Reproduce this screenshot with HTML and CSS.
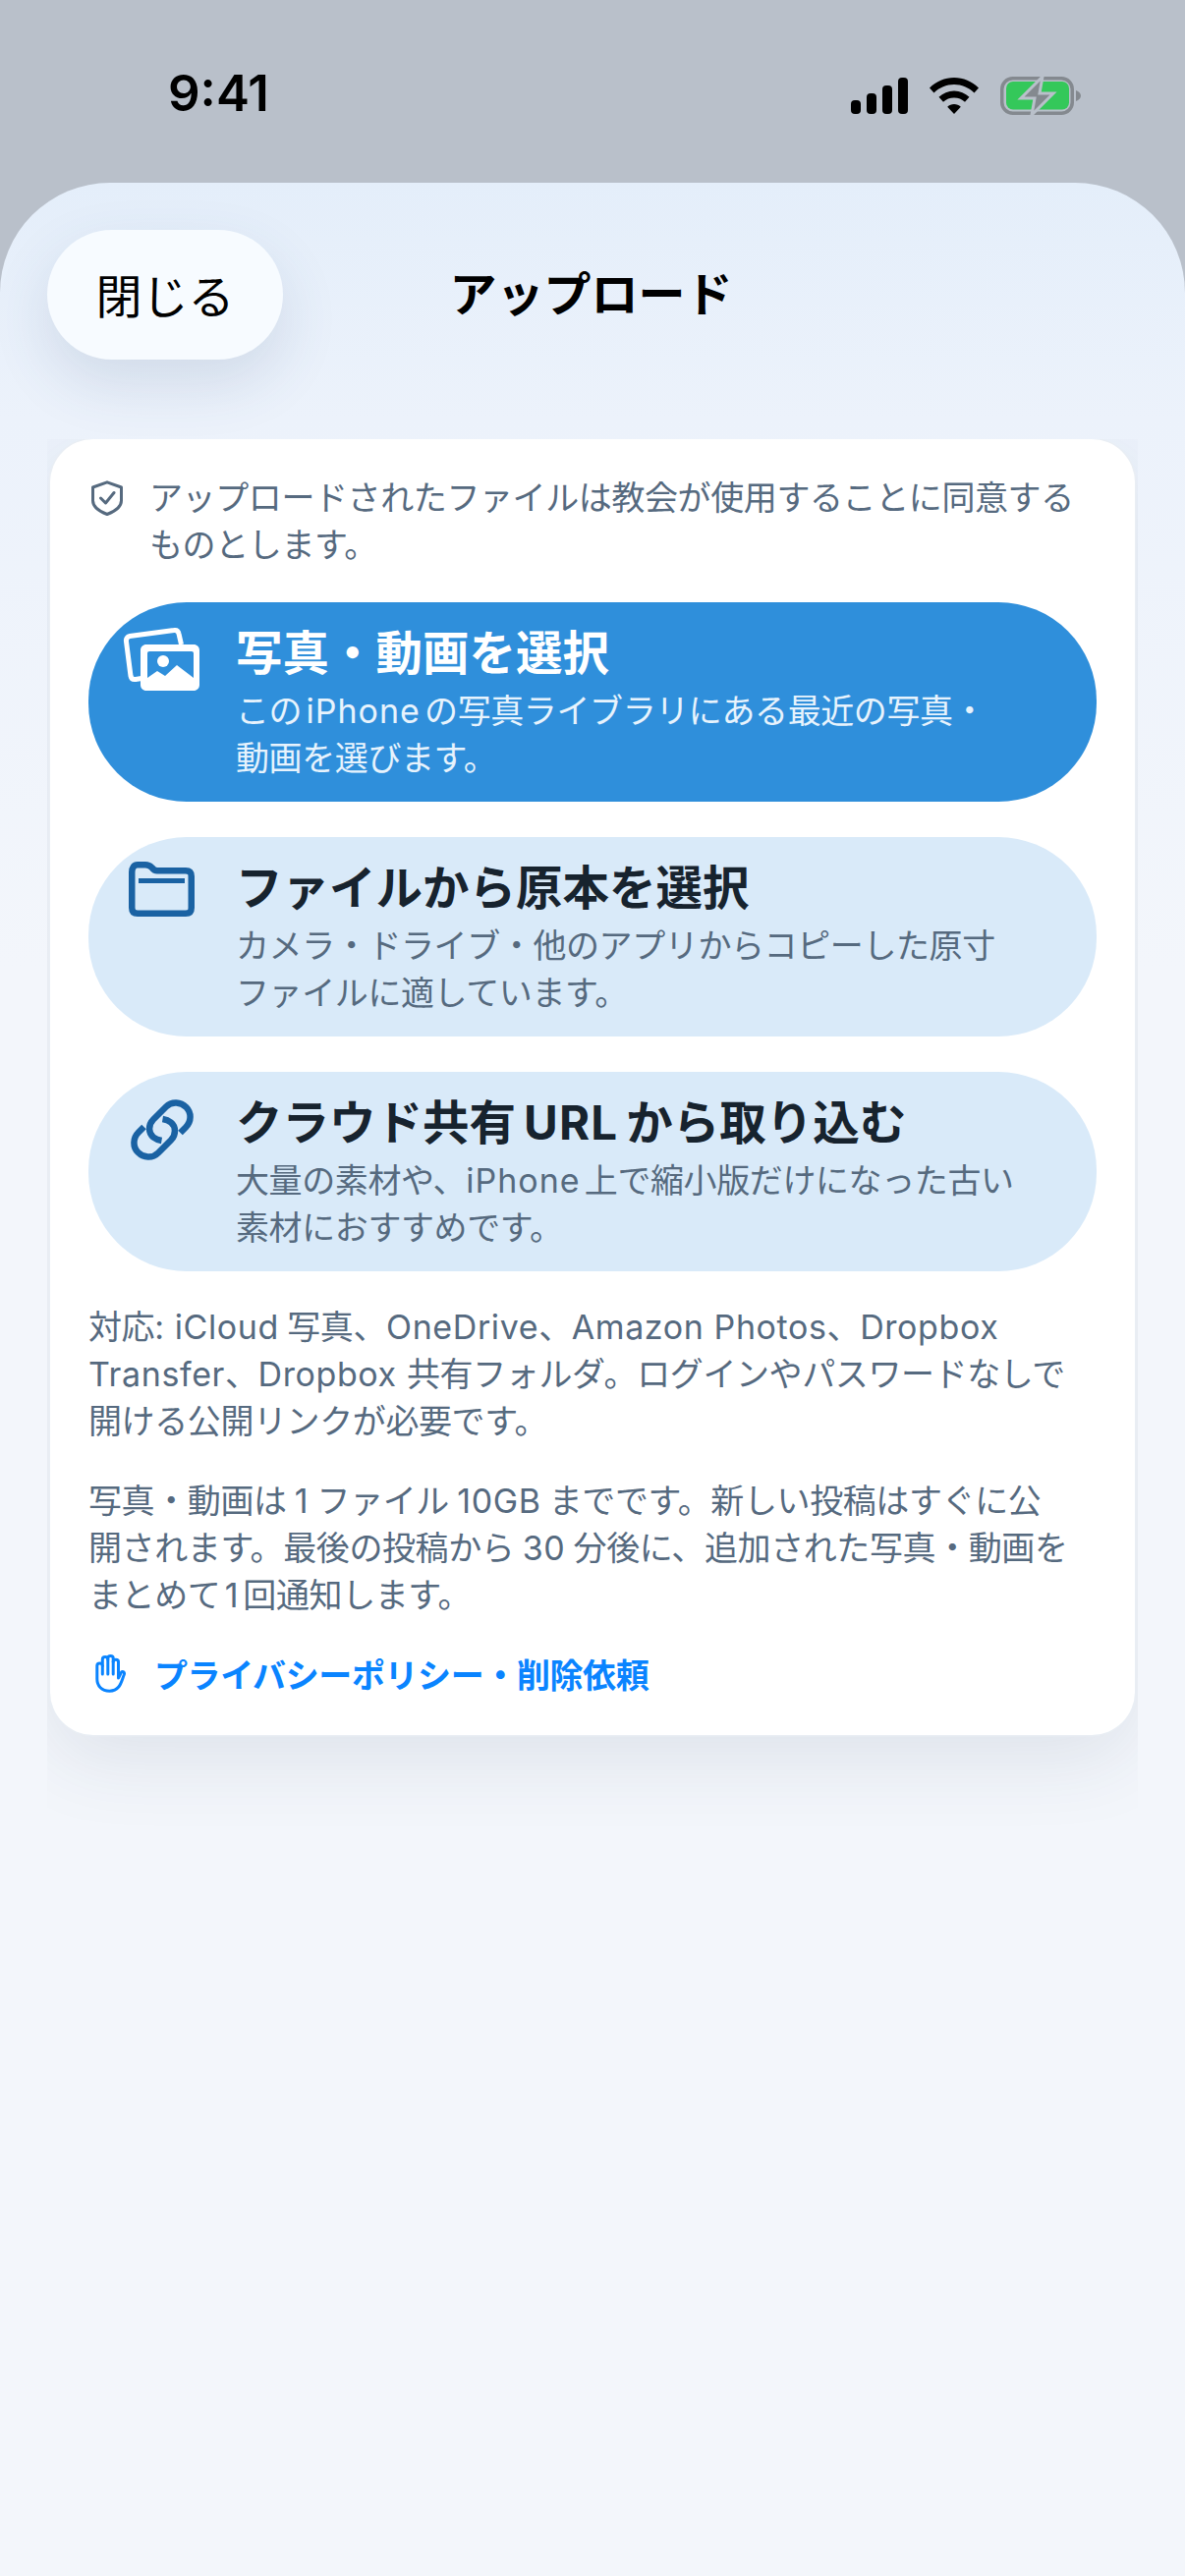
FILE: index.html
```html
<!DOCTYPE html>
<html lang="ja">
<head>
<meta charset="utf-8">
<title>アップロード</title>
<link rel="stylesheet" href="styles.css">
</head>
<body>
<div class="status">
  <span class="time">9:41</span>
  <div class="status-icons">
    <svg class="sig" width="58" height="37" viewBox="0 0 58 37"><rect x="0" y="23" width="10" height="14" rx="4"/><rect x="16" y="16" width="10" height="21" rx="4"/><rect x="32" y="8" width="10" height="29" rx="4"/><rect x="48" y="0" width="10" height="37" rx="4"/></svg>
    <svg class="wifi" width="50" height="37" viewBox="0 0 50 37"><path d="M25 0C34.500 0 43 3.700 50 10.500L45.500 15.500C39.800 10 32.800 7 25 7S10.200 10 4.500 15.500L0 10.500C7 3.700 15.500 0 25 0Z"/><path d="M25 13.500C31 13.500 36.300 15.800 40.500 19.800L36 24.800C33 22 29.300 20.500 25 20.500S17 22 14 24.800L9.500 19.800C13.700 15.800 19 13.500 25 13.500Z"/><path d="M25 27C27.600 27 30 28 31.800 29.700L25 37L18.200 29.700C20 28 22.400 27 25 27Z"/></svg>
    <svg class="batt" width="82" height="39" viewBox="0 0 82 39"><rect x="1.750" y="1.750" width="71.500" height="35.500" rx="11" fill="none" stroke="#84898f" stroke-width="3.500"/><rect x="6" y="5" width="64" height="28.500" rx="7" fill="#34c85a"/><path d="M77 14C80 15 82 17 82 19.500S80 24 77 25Z" fill="#84898f"/><path d="M43 0L21 22H35L32 39L54 17H40Z" fill="#84898f" stroke="#b9c0ca" stroke-width="3"/></svg>
  </div>
</div>
<main class="sheet">
  <header class="head">
    <button class="close">閉じる</button>
    <h1 class="title">アップロード</h1>
    <span></span>
  </header>
  <div class="clip">
    <section class="card">
      <div class="consent">
        <svg class="shield" width="34" height="36" viewBox="0 0 34 36" fill="none" stroke="#566a7f" stroke-width="3" stroke-linecap="round" stroke-linejoin="round"><path d="M17 1.800L31.500 7V20.500C31.500 26.500 25 31.500 17 34.500C9 31.500 2.500 26.500 2.500 20.500V7Z"/><path d="M10.500 18L15.500 23L24 12.500"/></svg>
        <p>アップロードされたファイルは教会が使用することに同意する<br>ものとします。</p>
      </div>
      <div class="choices">
        <button class="choice primary">
          <svg class="ico" width="80" height="80" viewBox="0 0 80 80"><path fill="none" stroke="#fff" stroke-width="5" d="M19 52.500L13 53.500C10 54 8.500 52.500 8 50L3.500 15C3 12 4.500 10 7 9.500L52 3.500C55 3 56.500 4.500 57 7L59.500 18"/><path fill="#fff" fill-rule="evenodd" d="M24 18H72C75.500 18 78 20.500 78 24V59C78 62.500 75.500 65 72 65H24C20.500 65 18 62.500 18 59V24C18 20.500 20.500 18 24 18ZM27 25C25.800 25 25 25.800 25 27V52L35 45L43 50L55 39L72 52V27C72 25.800 71.200 25 70 25Z"/><circle cx="41" cy="35" r="6" fill="#fff"/></svg>
          <span class="txt"><span class="t">写真・動画を選択</span><span class="s">この<span class="la">iPhone</span>の写真ライブラリにある最近の写真・<br>動画を選びます。</span></span>
        </button>
        <button class="choice">
          <svg class="ico" width="80" height="80" viewBox="0 0 80 80" fill="none" stroke="#1a62a3" stroke-width="6.500" stroke-linejoin="round"><path d="M9.250 11C9.250 6 11.500 3.250 15 3.250H23C26 3.250 27.500 4 29.500 6C31 8 32.500 9.250 35 9.250H64C68 9.250 69.750 11 69.750 15V47C69.750 51 68 52.750 64 52.750H15C11.500 52.750 9.250 51 9.250 47Z"/><path d="M16 19.500H63" stroke-width="5"/></svg>
          <span class="txt"><span class="t">ファイルから原本を選択</span><span class="s">カメラ・ドライブ・他のアプリからコピーした原寸<br>ファイルに適しています。</span></span>
        </button>
        <button class="choice">
          <svg class="ico" width="80" height="80" viewBox="0 0 80 80" fill="none" stroke="#1a62a3" stroke-width="6.500"><path d="M58.500 37L64 31.500C70 25.500 70 16.500 64.500 11C59 5.500 50 4.500 44 10.500L31 23.500C25.500 29 26 37.500 31 41.500C33.500 43.500 36.500 44.500 39.500 45"/><path d="M21.500 31L16 36.500C10 42.500 10 51.500 15.500 57C21 62.500 30 63.500 36 57.500L49 44.500C54.500 39 54 30.500 49 26.500C46.500 24.500 43.500 23.500 40.500 23"/></svg>
          <span class="txt"><span class="t">クラウド共有<span class="la url">URL</span>から取り込む</span><span class="s">大量の素材や、<span class="la">iPhone</span>上で縮小版だけになった古い<br>素材におすすめです。</span></span>
        </button>
      </div>
      <p class="note first">対応<span class="la tail">: iCloud</span>写真、<span class="la">OneDrive</span>、<span class="la">Amazon Photos</span>、<span class="la">Dropbox</span><br><span class="la">Transfer</span>、<span class="la end">Dropbox</span>共有フォルダ。ログインやパスワードなしで<br>開ける公開リンクが必要です。</p>
      <p class="note second">写真・動画は<span class="la num">1</span>ファイル<span class="la num">10GB</span>までです。新しい投稿はすぐに公<br>開されます。最後の投稿から<span class="la num">30</span>分後に、追加された写真・動画を<br>まとめて<span class="la">1</span>回通知します。</p>
      <a class="link" href="#">
        <svg class="hand" width="32" height="39" viewBox="0 0 32 39" fill="none" stroke="#0a84ff" stroke-width="3" stroke-linecap="round" stroke-linejoin="round"><path d="M1.800 25V11.500C1.800 8 7.300 8 7.300 11.500V5C7.300 1.500 12.800 1.500 12.800 5V3.800C12.800 .8 18.200 .8 18.200 3.800V7.500C18.200 4.500 23.500 4.500 23.500 7.500V24L26 19C27 16.500 30.500 17.500 29.300 20.500C26.500 27 25.500 37.200 14.500 37.200C6.500 37.200 1.800 32 1.800 25Z"/><path d="M7.300 11.500V20M12.800 5V20M18.200 7V20"/></svg>
        <span>プライバシーポリシー・削除依頼</span>
      </a>
    </section>
  </div>
</main>
</body>
</html>
```
FILE: styles.css
```css
* { box-sizing: border-box; }
html, body { margin: 0; padding: 0; }
body {
  width: 1206px;
  height: 2622px;
  overflow: hidden;
  background: #b9c0ca;
  font-family: "Inter", "Noto Sans CJK JP", sans-serif;
  text-autospace: normal;
  text-spacing-trim: space-all;
}
.status {
  height: 186px;
  display: flex;
  justify-content: space-between;
  align-items: flex-start;
  padding: 70px 106px 0 171px;
}
.time {
  font-size: 51px;
  font-weight: 600;
  line-height: 50px;
  color: #000;
  letter-spacing: 0;
}
.status-icons {
  display: flex;
  gap: 22px;
  padding-top: 8px;
  align-items: center;
}
.sheet {
  height: 2436px;
  border-radius: 112px 112px 0 0;
  background: linear-gradient(180deg, #e4eefa 0, #ecf2fb 240px, #f3f6fb 800px, #f3f6fb 100%);
  overflow: hidden;
}
.head {
  display: grid;
  grid-template-columns: 1fr auto 1fr;
  align-items: center;
  padding: 48px 51px 0 48px;
  height: 261px;
  align-content: start;
}
.close {
  width: 240px;
  height: 132px;
  border: 0;
  border-radius: 66px;
  background: #f7fbff;
  font: 400 47px "Inter", "Noto Sans CJK JP", sans-serif;
  color: #000;
  box-shadow: 0 24px 60px rgba(60, 85, 125, 0.14);
  padding: 0 0 3px;
}
.title {
  margin: 0;
  font-size: 48px;
  font-weight: 700;
  color: #000;
  line-height: 56px;
}
.clip {
  margin: 0 48px;
  padding: 0 3px 100px;
  overflow: hidden;
}
.card {
  background: #fff;
  border-radius: 44px;
  padding: 36px 39px 37px;
  height: 1319px;
  box-shadow: 0 0 0 1.500px #e9eef4, 0 24px 80px rgba(40, 60, 90, 0.1);
  color: #566a7f;
}
.consent {
  display: flex;
  align-items: flex-start;
  gap: 26px;
  font-size: 34px;
  line-height: 48px;
  letter-spacing: -0.4px;
}
.consent p { margin: 0; white-space: nowrap; }
.shield { flex: none; margin: 6px 0 0 2px; }
.choices {
  display: flex;
  flex-direction: column;
  gap: 36px;
  margin-top: 34px;
}
.choice {
  display: flex;
  align-items: flex-start;
  gap: 35px;
  height: 203px;
  padding: 25px 0 0 35px;
  border: 0;
  border-radius: 100px;
  background: #d9eaf9;
  text-align: left;
  font-family: inherit;
  color: #566a7f;
}
.choice.primary { background: #2f8fdb; color: #e7f3fd; }
.ico { flex: none; }
.txt { display: flex; flex-direction: column; gap: 6px; }
.t {
  font-size: 47.500px;
  font-weight: 700;
  line-height: 56px;
  margin-top: -1px;
  margin-bottom: 1px;
  color: #17232e;
  white-space: nowrap;
}
.primary .t { color: #fff; }
.s {
  font-size: 34px;
  line-height: 48px;
  white-space: nowrap;
  letter-spacing: -0.4px;
}
.note {
  margin: 0;
  font-size: 34px;
  line-height: 48px;
  white-space: nowrap;
  letter-spacing: -0.4px;
}
.la { letter-spacing: 0.6px; }
.s .la { letter-spacing: 1px; }
.la.num { padding: 0 4px; }
.la.tail { padding-right: 4px; }
.la.end { padding-right: 6px; }
.t .la.url { letter-spacing: 1.200px; padding: 0 2px; }
.first { margin-top: 33px; }
.second { margin-top: 33px; }
.link {
  display: flex;
  align-items: center;
  gap: 28px;
  height: 48px;
  margin-top: 31px;
  color: #0a84ff;
  font-size: 34px;
  font-weight: 700;
  text-decoration: none;
  letter-spacing: -0.4px;
}
.hand { flex: none; margin-left: 7px; }
```
